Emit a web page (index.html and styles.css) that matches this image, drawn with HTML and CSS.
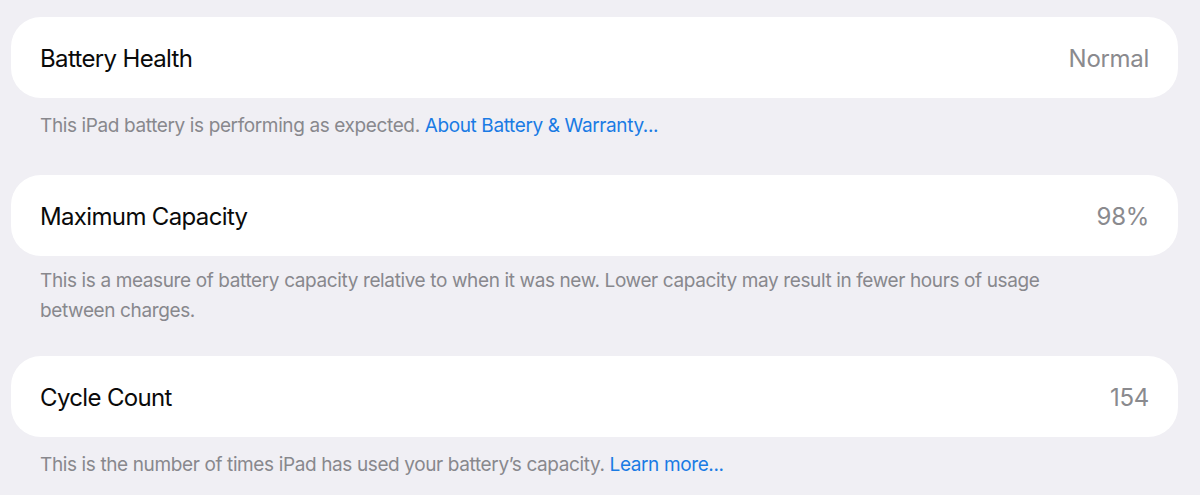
FILE: index.html
```html
<!DOCTYPE html>
<html lang="en">
<head>
<meta charset="utf-8">
<title>Battery</title>
<link rel="stylesheet" href="styles.css">
</head>
<body>
<main class="page">
  <section class="group">
    <div class="card">
      <span class="label">Battery Health</span>
      <span class="value">Normal</span>
    </div>
    <p class="footer">This iPad battery is performing as expected. <a class="link" href="#">About Battery &amp; Warranty...</a></p>
  </section>
  <section class="group">
    <div class="card">
      <span class="label">Maximum Capacity</span>
      <span class="value">98%</span>
    </div>
    <p class="footer footer-multi">This is a measure of battery capacity relative to when it was new. Lower capacity may result in fewer hours of usage<br>between charges.</p>
  </section>
  <section class="group">
    <div class="card">
      <span class="label">Cycle Count</span>
      <span class="value">154</span>
    </div>
    <p class="footer">This is the number of times iPad has used your battery’s capacity. <a class="link" href="#">Learn more...</a></p>
  </section>
</main>
</body>
</html>
```
FILE: styles.css
```css
html, body {
  margin: 0;
  padding: 0;
  background: #f0eff4;
}
body {
  font-family: Inter, "Liberation Sans", Arial, sans-serif;
  -webkit-font-smoothing: antialiased;
}
.page {
  padding: 17px 22px 0 11px;
  display: flex;
  flex-direction: column;
}
.group {
  display: flex;
  flex-direction: column;
}
.card {
  height: 81px;
  background: #ffffff;
  border-radius: 30px;
  display: flex;
  align-items: center;
  justify-content: space-between;
  padding: 2px 29px 0;
  box-sizing: border-box;
}
.label {
  font-size: 24px;
  letter-spacing: -0.65px;
  color: #0a0a0a;
}
.value {
  font-size: 24px;
  letter-spacing: -0.3px;
  color: #8a8a8e;
}
.footer {
  margin: 13px 0 34px;
  padding: 0 29px;
  font-size: 19px;
  line-height: 30px;
  letter-spacing: -0.38px;
  color: #88888d;
}
.footer-multi {
  margin: 10px 0 30px;
}
.link {
  color: #1a7be4;
  text-decoration: none;
}
```
